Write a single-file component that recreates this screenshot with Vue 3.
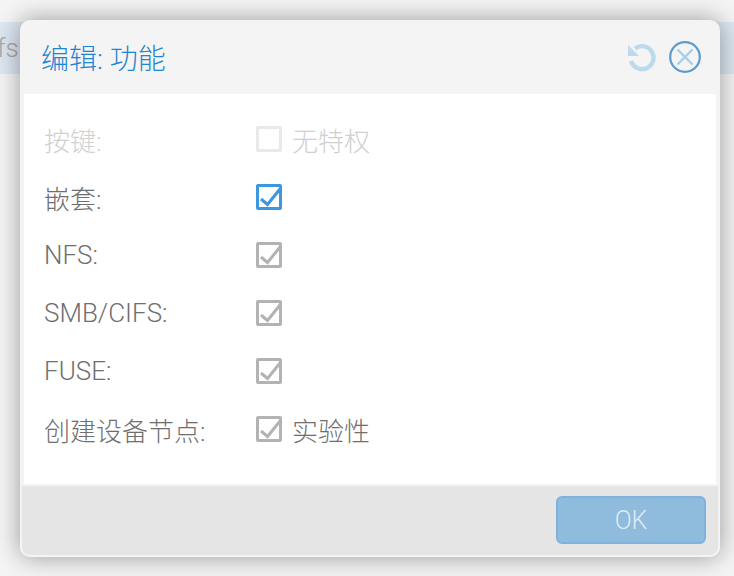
<script setup>
const rows = [
  { label: '按键:', box: 'off', text: '无特权', disabled: true },
  { label: '嵌套:', box: 'blue' },
  { label: 'NFS:', box: 'grey' },
  { label: 'SMB/CIFS:', box: 'grey' },
  { label: 'FUSE:', box: 'grey' },
  { label: '创建设备节点:', box: 'grey', text: '实验性' },
]
</script>

<template>
  <div class="page">
    <div class="backdrop-bar"><span class="bar-text">fs</span></div>
    <section class="dialog">
      <header class="head">
        <h1 class="title">编辑: 功能</h1>
        <div class="tools">
          <svg class="reset" width="30" height="30" viewBox="0 0 30 30" fill="none">
            <path d="M9 6.5 A11.5 11.5 0 1 1 5 19" stroke="#bcd9ee" stroke-width="4.4" />
            <path d="M2 3 L2 14 L13 14 Z" fill="#bcd9ee" />
          </svg>
          <svg class="close" width="34" height="34" viewBox="0 0 34 34" fill="none">
            <circle cx="17" cy="17" r="14.8" stroke="#5d9bcd" stroke-width="2.2" />
            <path d="M9.5 9.5 L24.5 24.5 M24.5 9.5 L9.5 24.5" stroke="#a6cde9" stroke-width="2.4" />
          </svg>
        </div>
      </header>
      <div class="body">
        <div v-for="row in rows" :key="row.label" class="row" :class="{ disabled: row.disabled }">
          <span class="label">{{ row.label }}</span>
          <span class="check" :class="row.box">
            <svg v-if="row.box !== 'off'" width="22" height="22" viewBox="0 0 22 22" fill="none">
              <path class="tick" d="M2 13 L8.5 18.5 L21 3" stroke-width="3" />
            </svg>
          </span>
          <span v-if="row.text" class="note">{{ row.text }}</span>
        </div>
      </div>
      <footer class="foot">
        <button class="ok" type="button">OK</button>
      </footer>
    </section>
  </div>
</template>

<style>
html, body { margin: 0; background: #fff; }
</style>

<style scoped>
.page {
  position: relative;
  width: 734px;
  height: 576px;
  overflow: hidden;
  background: #f4f4f4;
  font-family: Roboto, "Noto Sans CJK SC", sans-serif;
  font-weight: 300;
}
.backdrop-bar {
  height: 52px;
  margin-top: 22px;
  background: #dde7f1;
  display: flex;
  align-items: center;
}
.page { padding-top: 0.02px; box-sizing: border-box; }
.bar-text {
  margin-left: -3px;
  font-size: 26px;
  color: #a9a9a9;
}
.dialog {
  position: absolute;
  left: 20px;
  top: 20px;
  width: 700px;
  height: 537px;
  box-sizing: border-box;
  display: flex;
  flex-direction: column;
  background: #f4f4f4;
  border-radius: 10px;
  box-shadow: 0 0 24px rgba(0, 0, 0, 0.38);
  overflow: hidden;
}
.head {
  height: 74px;
  flex: none;
  display: flex;
  align-items: center;
  justify-content: space-between;
  padding: 0 18px 0 21px;
}
.title {
  margin: 0;
  font-size: 28px;
  font-weight: 300;
  color: #1f84d2;
}
.tools {
  display: flex;
  align-items: center;
  gap: 12px;
  margin-top: 0;
}
.reset, .close { display: block; }
.close { filter: blur(0.5px); }
.reset { filter: blur(0.3px); }
.body {
  flex: 1;
  margin: 0 4px;
  padding-top: 16px;
  background: #fff;
}
.row {
  height: 58px;
  padding-left: 20px;
  display: flex;
  align-items: center;
  font-size: 26px;
  color: #6f6f6f;
}
.row.disabled { color: #d0d0d0; }
.label { width: 212px; flex: none; }
.check {
  width: 26px;
  height: 26px;
  box-sizing: border-box;
  flex: none;
  border: 3px solid #b3b3b3;
  border-radius: 2px;
  position: relative;
}
.check svg { position: absolute; left: 0; top: -1px; overflow: visible; }
.tick { stroke: #b3b3b3; }
.check.off { border-color: #e9e9e9; }
.check.blue { border-color: #3d97de; }
.check.blue .tick { stroke: #3d97de; }
.note { margin-left: 10px; }
.foot {
  height: 73px;
  flex: none;
  box-sizing: border-box;
  background: #e5e5e5;
  border: 2px solid #f4f4f4;
  border-bottom-left-radius: 10px;
  border-bottom-right-radius: 10px;
  display: flex;
  align-items: flex-start;
  justify-content: flex-end;
  padding: 10px 12px 0 0;
}
.ok {
  width: 150px;
  height: 48px;
  border: 2px solid #7fb2dc;
  border-radius: 6px;
  background: #8fbbdd;
  color: #dfeaf4;
  font-family: inherit;
  font-weight: 300;
  font-size: 25px;
}
</style>
